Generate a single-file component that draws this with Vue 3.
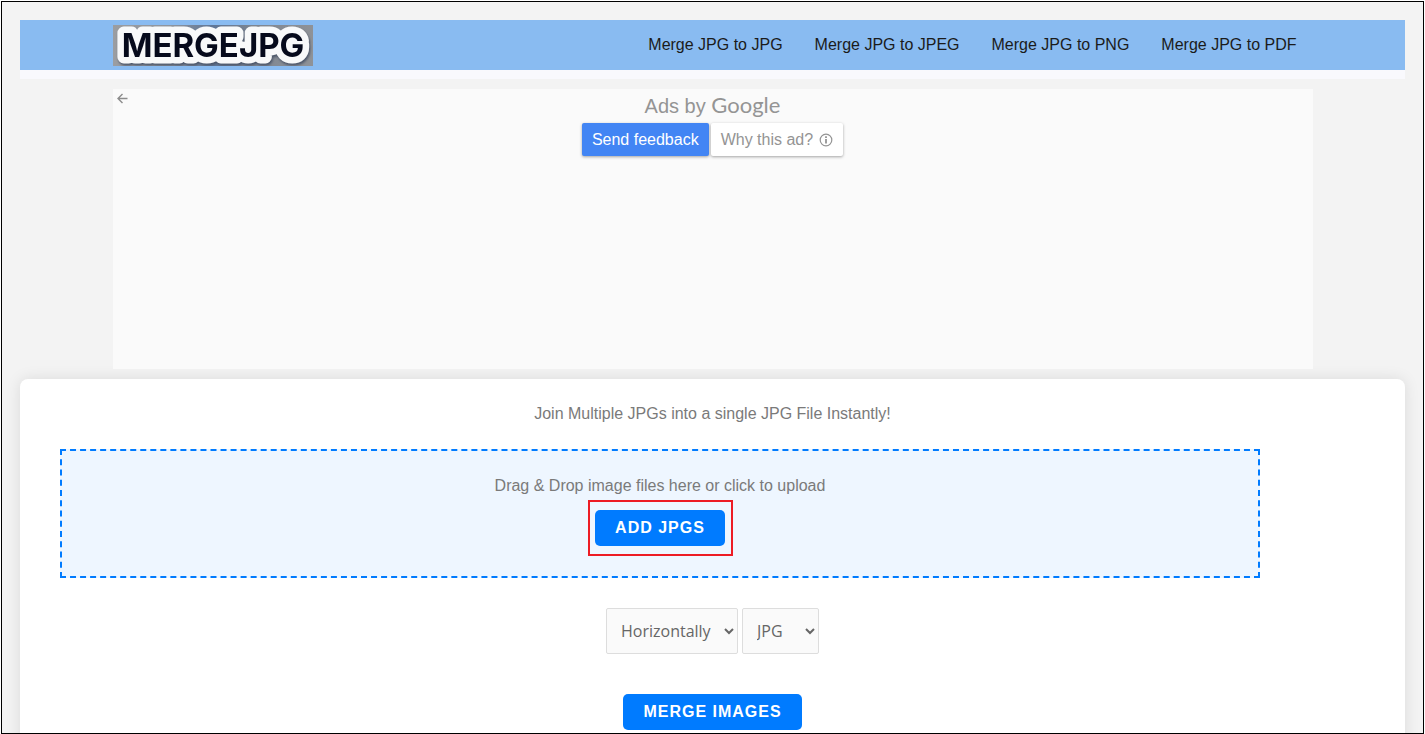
<script setup>
import { ref } from 'vue';

const links = ['Merge JPG to JPG', 'Merge JPG to JPEG', 'Merge JPG to PNG', 'Merge JPG to PDF'];
const direction = ref('Horizontally');
const format = ref('JPG');
const fileInput = ref(null);

function pickFiles() {
  fileInput.value.click();
}
</script>

<template>
  <div class="page">
    <header class="site-header">
      <div class="container header-inner">
        <a href="#" class="logo" aria-label="MERGEJPG">
          <svg width="200" height="41" viewBox="0 0 200 41">
            <defs>
              <linearGradient id="logo-bg" x1="0" y1="0" x2="1" y2="0">
                <stop offset="0" stop-color="#9b9da1" />
                <stop offset="0.3" stop-color="#8d949e" />
                <stop offset="0.5" stop-color="#5f7697" />
                <stop offset="0.7" stop-color="#7d8591" />
                <stop offset="1" stop-color="#8f9297" />
              </linearGradient>
            </defs>
            <rect width="200" height="41" fill="url(#logo-bg)" />
            <text class="logo-text" x="100" y="32" text-anchor="middle">MERGEJPG</text>
          </svg>
        </a>
        <nav class="nav">
          <a v-for="link in links" :key="link" href="#">{{ link }}</a>
        </nav>
      </div>
    </header>

    <!-- 广告位 -->
    <section class="container ad">
      <button class="ad-back" aria-label="Back">
        <svg width="11" height="11" viewBox="0 0 11 11">
          <path d="M10.5 5.5H1.2M5.5 1L1 5.5L5.5 10" fill="none" stroke="#8c8c8c" stroke-width="1.4" />
        </svg>
      </button>
      <div class="ad-title">Ads by <span class="google">Google</span></div>
      <div class="ad-actions">
        <button class="feedback">Send feedback</button>
        <button class="why">
          Why this ad?
          <svg width="14" height="14" viewBox="0 0 14 14">
            <circle cx="7" cy="7" r="5.8" fill="none" stroke="#949494" stroke-width="1.2" />
            <path d="M7 3.3v1.6M7 6v4.6" stroke="#949494" stroke-width="1.8" />
          </svg>
        </button>
      </div>
    </section>

    <main class="card">
      <p class="intro">Join Multiple JPGs into a single JPG File Instantly!</p>
      <div class="drop-zone">
        <p>Drag &amp; Drop image files here or click to upload</p>
        <div class="add-wrap">
          <button class="btn" @click="pickFiles">ADD JPGS</button>
        </div>
        <input ref="fileInput" type="file" accept="image/jpeg" multiple hidden aria-label="Add JPGs" />
      </div>
      <div class="options">
        <select v-model="direction" class="direction" aria-label="Direction">
          <option>Horizontally</option>
          <option>Vertically</option>
        </select>
        <select v-model="format" class="format" aria-label="Format">
          <option>JPG</option>
          <option>JPEG</option>
          <option>PNG</option>
          <option>PDF</option>
        </select>
      </div>
      <button class="btn">MERGE IMAGES</button>
    </main>
  </div>
</template>

<style>
body {
  margin: 0;
  background: #fff;
  overflow: hidden;
}
</style>

<style scoped>
* {
  box-sizing: border-box;
}

.page {
  height: calc(100vh - 1px);
  margin: 1px 1px 0;
  padding: 18px 18px 0;
  border: 1px solid #000;
  background: #f3f3f3;
  overflow: hidden;
  font-family: "Liberation Sans", Arial, sans-serif;
  font-size: 16px;
  color: #7a7a7a;
  display: flow-root;
}

.container {
  max-width: 1200px;
  margin: 0 auto;
}

p {
  margin: 0;
  line-height: 30px;
}

button {
  font-family: inherit;
  font-size: 16px;
  cursor: pointer;
}

.site-header {
  background: #89bbf1;
  border-bottom: 9px solid #f9f9fd;
}

.header-inner {
  display: flex;
  align-items: center;
  justify-content: space-between;
  height: 50px;
}

.logo svg {
  display: block;
}

/* 白色描边在文字下方，再加一层阴影 */
.logo-text {
  font-family: Inter, "Open Sans", sans-serif;
  font-size: 33px;
  font-weight: 700;
  fill: #060a1c;
  paint-order: stroke;
  stroke: #f8f9fa;
  stroke-width: 13px;
  stroke-linejoin: round;
  filter: drop-shadow(1px 2px 1px #4c5669);
}

.nav {
  display: flex;
}

.nav a {
  padding: 0 16px;
  color: #1b1b1b;
  text-decoration: none;
}

/* 广告区域 */
.ad {
  position: relative;
  margin-top: 10px;
  height: 280px;
  background: #fafafa;
  text-align: center;
}

.ad-back {
  position: absolute;
  top: 4px;
  left: 4px;
  padding: 0;
  border: none;
  background: none;
  line-height: 0;
}

.ad-title {
  height: 34px;
  font-size: 20px;
  line-height: 31px;
  color: #949494;
}

.google {
  font-family: Lato, sans-serif;
  font-size: 22px;
  font-weight: 400;
}

.ad-actions {
  display: flex;
  justify-content: center;
  gap: 2px;
}

.ad-actions button {
  display: flex;
  align-items: center;
  gap: 6px;
  height: 33px;
  padding: 0 10px;
  border: none;
  border-radius: 2px;
  box-shadow: 0 1px 3px rgba(0, 0, 0, 0.35);
}

.ad-actions .feedback {
  background: #4285f4;
  color: #fff;
}

.ad-actions .why {
  background: #fff;
  color: #949494;
}

.card {
  margin-top: 10px;
  padding: 20px 40px;
  min-height: 400px;
  border-radius: 8px;
  background: #fff;
  box-shadow: 0 0 15px rgba(0, 0, 0, 0.1);
  text-align: center;
}

.drop-zone {
  max-width: 1200px;
  margin-top: 20px;
  padding: 20px 20px 30px;
  border: 2px dashed #007bff;
  background: #eef6ff;
}

.add-wrap {
  position: relative;
  width: fit-content;
  margin: 9px auto 0;
}

/* 按钮外的红色标记框 */
.add-wrap::after {
  content: "";
  position: absolute;
  inset: -10px -8px -10px -7px;
  border: 2px solid #ed1c24;
  pointer-events: none;
}

.btn {
  display: block;
  height: 36px;
  margin: 0 auto;
  padding: 0 20px;
  border: none;
  border-radius: 5px;
  background: #007bff;
  color: #fff;
  font-weight: 700;
  letter-spacing: 1px;
}

.options {
  display: flex;
  justify-content: center;
  gap: 4px;
  margin: 30px 0 40px;
}

select {
  height: 46px;
  padding: 0 10px;
  border: 1px solid #ddd;
  border-radius: 2px;
  background: #fafafa;
  color: #666;
  font-family: "Open Sans", sans-serif;
  font-size: 16px;
}

.direction {
  width: 132px;
}

.format {
  width: 77px;
}
</style>
